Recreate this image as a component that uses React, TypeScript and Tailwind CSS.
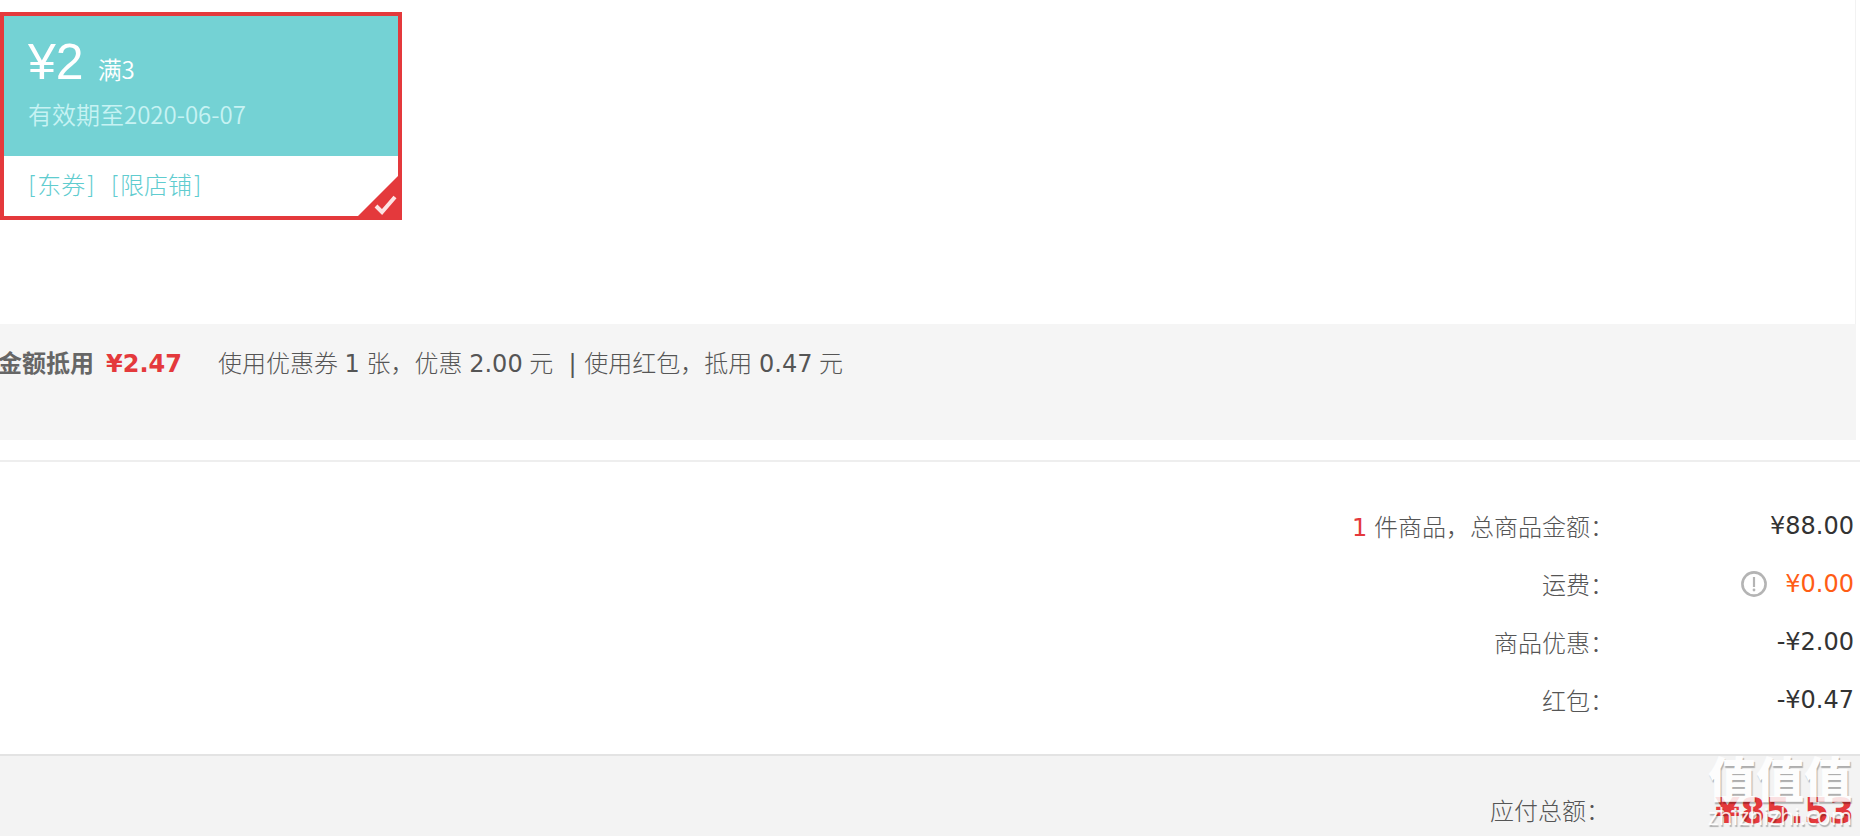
import React, { useState } from 'react';

const Num: React.FC<{ children: React.ReactNode }> = ({ children }) => (
  <span className="font-normal font-['DejaVu_Sans',sans-serif]">{children}</span>
);

const rows = [
  { label: '件商品，总商品金额：', count: 1, value: '¥88.00' },
  { label: '运费：', value: '¥0.00', freight: true },
  { label: '商品优惠：', value: '-¥2.00' },
  { label: '红包：', value: '-¥0.47' },
];

const tags = ['[东券]', '[限店铺]'];

const InfoIcon: React.FC = () => (
  <svg className="w-[26px] h-[26px]" viewBox="0 0 26 26" fill="none">
    <circle cx="13" cy="13" r="11.6" stroke="#b4b4b4" strokeWidth="2.6" />
    <path d="M13 6v10" stroke="#b4b4b4" strokeWidth="2.2" />
    <circle cx="13" cy="19" r="1.4" fill="#b4b4b4" />
  </svg>
);

const Coupon: React.FC = () => {
  const [selected, setSelected] = useState(true);

  return (
    <button
      type="button"
      aria-pressed={selected}
      onClick={() => setSelected(!selected)}
      className={`relative block w-[402px] border-4 text-left ${selected ? 'border-[#e4393c]' : 'border-[#74d2d4]'}`}
    >
      <span className="block h-[140px] bg-[#74d2d4] px-6 pt-3.5 text-white font-[350] font-['Noto_Sans_CJK_SC',sans-serif]">
        <span className="flex items-baseline gap-3.5 h-16">
          <span className="text-[50px] leading-16 font-normal font-['Liberation_Sans',sans-serif]">¥2</span>
          <span>满3</span>
        </span>
        <span className="block leading-10 text-[#c7f2f3]">有效期至2020-06-07</span>
      </span>
      <span className="flex gap-4 h-[60px] px-6 leading-[60px] text-[#60cccf] font-['DejaVu_Sans','Noto_Sans_CJK_SC',sans-serif]">
        {tags.map((tag) => (
          <span key={tag}>{tag}</span>
        ))}
      </span>
      {selected && (
        <svg className="absolute right-0 bottom-0 w-10 h-10" viewBox="0 0 40 40" fill="none">
          <path d="M0 40 40 0v40z" fill="#e4393c" />
          <path d="M18 30l6 6 13-15" stroke="#fde4e4" strokeWidth="4" />
        </svg>
      )}
    </button>
  );
};

const App: React.FC = () => {
  return (
    <div lang="zh-CN" className="bg-white overflow-hidden text-2xl font-light text-[#555] font-['Liberation_Sans','Noto_Sans_CJK_SC',sans-serif]">
      <div className="mr-1">
        <div className="h-[324px] pt-3 border-r border-[#f2f2f2]">
          <Coupon />
        </div>
        <div className="flex h-[116px] bg-[#f5f5f5] pt-5 leading-10 whitespace-nowrap">
          <strong className="-ml-0.5 font-bold text-[#666]">金额抵用</strong>
          <strong className="ml-3 font-bold text-[#e4393c] font-['DejaVu_Sans',sans-serif]">¥2.47</strong>
          <span className="ml-9">
            使用优惠券 <Num>1</Num> 张，优惠 <Num>2.00</Num> 元<Num>&nbsp; | </Num>使用红包，抵用 <Num>0.47</Num> 元
          </span>
        </div>
      </div>

      <dl className="mt-5 border-t-2 border-[#eee] pt-9 pb-6">
        {rows.map((row) => (
          <div key={row.label} className="flex justify-end h-[58px] leading-[60px] pr-1.5">
            <dt>
              {row.count && <em className="not-italic text-[#e4393c]"><Num>{row.count}</Num> </em>}
              {row.label}
            </dt>
            <dd className={`flex w-60 h-14 items-center justify-end gap-[18px] ${row.freight ? 'text-[#ff5d15]' : 'text-[#333]'}`}>
              {row.freight && (
                <button type="button" aria-label="运费说明">
                  <InfoIcon />
                </button>
              )}
              <Num>{row.value}</Num>
            </dd>
          </div>
        ))}
      </dl>

      <div className="relative flex justify-end h-[82px] border-t-2 border-[#e3e3e3] bg-[#f3f3f3] pt-[26px] pr-1.5 leading-[60px]">
        <span>应付总额：</span>
        <strong className="w-[244px] text-right text-4xl leading-[58px] font-bold text-[#e4393c] font-['DejaVu_Sans',sans-serif]">¥85.53</strong>
        <div className="absolute right-2 top-0 flex flex-col items-end text-white opacity-85 font-['Noto_Sans_CJK_SC',sans-serif] [text-shadow:1px_2px_1px_#0005]">
          <span className="text-5xl leading-10 font-black">值值值</span>
          <span className="text-[23px] leading-10 font-medium font-['Open_Sans',sans-serif]">zhizhizhi.com</span>
        </div>
      </div>
    </div>
  );
};

export default App;
